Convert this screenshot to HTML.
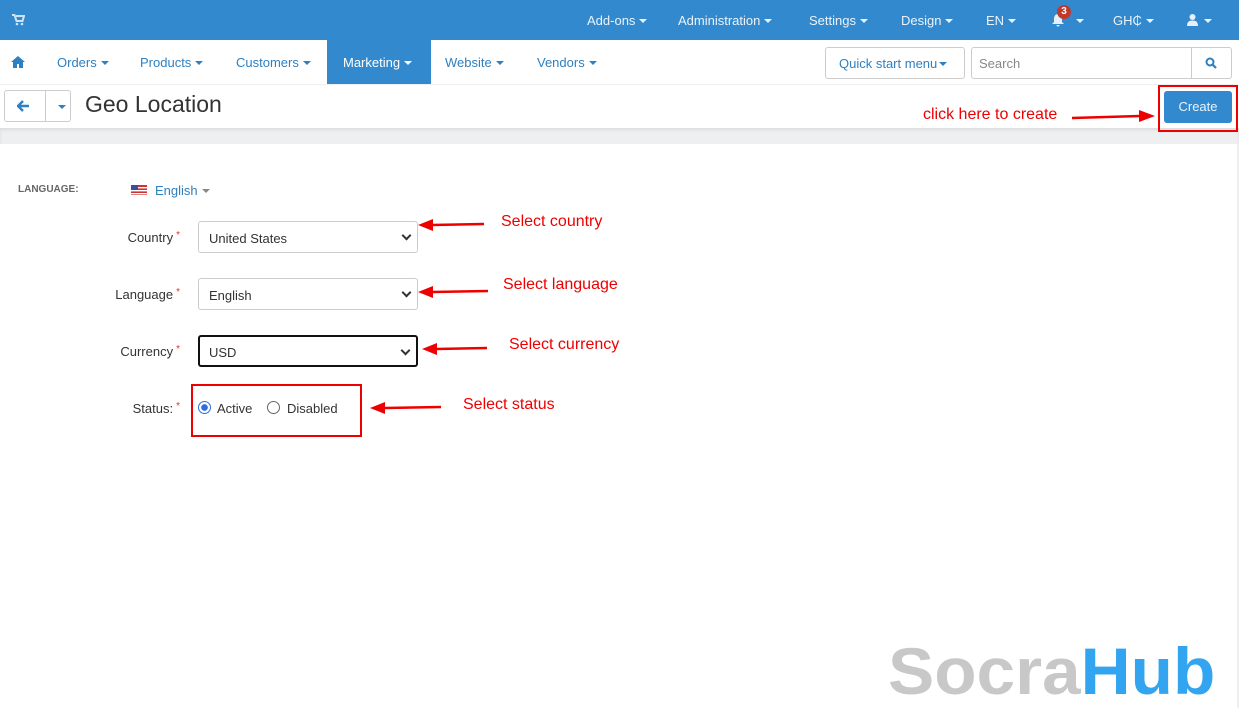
<!DOCTYPE html>
<html><head><style>
*{box-sizing:border-box;margin:0;padding:0}
body{width:1239px;height:708px;overflow:hidden;font-family:"Liberation Sans",sans-serif;background:#fff;position:relative;font-size:13px}
.abs{position:absolute}
.top{left:0;top:0;width:1239px;height:40px;background:#3289cd}
.top span{position:absolute;top:13px;color:#eaf3fb;font-size:13px;white-space:nowrap}
.car{display:inline-block;width:0;height:0;border-left:4px solid transparent;border-right:4px solid transparent;border-top:4px solid currentColor;vertical-align:middle;margin-left:4px;margin-top:-2px}
.nav{left:0;top:40px;width:1239px;height:45px;background:#fff;border-bottom:1px solid #eee}
.nav span{position:absolute;top:15px;color:#2e80c1;font-size:13px;white-space:nowrap}
.act{left:327px;top:40px;width:104px;height:44px;background:#3289cd}
.btn{border:1px solid #ccc;border-radius:3px;background:#fff}
.lbl{position:absolute;color:#333;font-size:13px;text-align:right;width:170px;left:10px}
.lbl i{color:#d33;font-style:normal;font-size:10px;vertical-align:top;margin-left:3px}
.sel{position:absolute;left:198px;width:220px;height:32px;border:1px solid #ccc;border-radius:3px;padding:9px 10px;color:#333;font-size:13px}
.sel:after{content:"";position:absolute;right:7px;top:10px;width:5px;height:5px;border-right:2px solid #333;border-bottom:2px solid #333;transform:rotate(45deg)}
.red{position:absolute;color:#e00;font-size:16px;white-space:nowrap}
</style></head><body>
<div class="abs top">
<svg class="abs" style="left:12px;top:14px" width="13" height="12" viewBox="0 0 13 12"><path d="M0 1h2.5l2 6h6l1.5-5H4" fill="none" stroke="#cfe3f4" stroke-width="2"/><circle cx="5" cy="10" r="1.3" fill="#cfe3f4"/><circle cx="10" cy="10" r="1.3" fill="#cfe3f4"/></svg>
<span style="left:587px">Add-ons<b class="car"></b></span>
<span style="left:678px">Administration<b class="car"></b></span>
<span style="left:809px">Settings<b class="car"></b></span>
<span style="left:901px">Design<b class="car"></b></span>
<span style="left:986px">EN<b class="car"></b></span>
<svg class="abs" style="left:1051px;top:13px" width="14" height="14" viewBox="0 0 14 14"><path d="M7 1C4 1 3 4 3 6v3L1 11h12l-2-2V6c0-2-1-5-4-5zM5.5 12a1.5 1.5 0 003 0z" fill="#e6f0fa"/></svg>
<div class="abs" style="left:1057px;top:5px;width:14px;height:14px;border-radius:7px;background:#c0392b;color:#fff;font-size:10px;text-align:center;line-height:14px;font-weight:bold">3</div>
<span style="left:1072px"><b class="car"></b></span>
<span style="left:1113px">GH₵<b class="car"></b></span>
<svg class="abs" style="left:1187px;top:14px" width="11" height="12" viewBox="0 0 11 12"><circle cx="5.5" cy="3" r="3" fill="#e6f0fa"/><path d="M0 12c0-4 2-5.5 5.5-5.5S11 8 11 12z" fill="#e6f0fa"/></svg>
<span style="left:1200px"><b class="car"></b></span>
</div>
<div class="abs nav">
<svg class="abs" style="left:11px;top:16px" width="14" height="12" viewBox="0 0 14 12"><path d="M7 0L0 6h2v6h4V8h2v4h4V6h2z" fill="#2e80c1"/></svg>
<span style="left:57px">Orders<b class="car"></b></span>
<span style="left:140px">Products<b class="car"></b></span>
<span style="left:236px">Customers<b class="car"></b></span>
<span style="left:445px">Website<b class="car"></b></span>
<span style="left:537px">Vendors<b class="car"></b></span>
</div>
<div class="abs act"><span style="position:absolute;left:16px;top:15px;color:#fff">Marketing<b class="car"></b></span></div>
<div class="abs btn" style="left:825px;top:47px;width:140px;height:32px;color:#2e80c1;padding:8px 13px;font-size:13px">Quick start menu<b class="car" style="margin-left:2px"></b></div>
<div class="abs btn" style="left:971px;top:47px;width:261px;height:32px;color:#888;padding:8px 7px">Search</div>
<div class="abs" style="left:1191px;top:48px;width:1px;height:30px;background:#ccc"></div>
<svg class="abs" style="left:1205px;top:57px" width="12" height="12" viewBox="0 0 12 12"><circle cx="5" cy="5" r="3.5" fill="none" stroke="#2e80c1" stroke-width="2"/><path d="M7.5 7.5L11 11" stroke="#2e80c1" stroke-width="2.2"/></svg>
<div class="abs btn" style="left:4px;top:90px;width:67px;height:32px"></div>
<div class="abs" style="left:45px;top:91px;width:1px;height:30px;background:#ccc"></div>
<svg class="abs" style="left:17px;top:100px" width="13" height="12" viewBox="0 0 13 12"><path d="M6 1L1 6l5 5M1.5 6H12" fill="none" stroke="#2e80c1" stroke-width="2.4"/></svg>
<span class="abs" style="left:54px;top:99px;color:#2e80c1"><b class="car"></b></span>
<div class="abs" style="left:85px;top:91px;font-size:23px;color:#333">Geo Location</div>
<div class="abs" style="left:0;top:128px;width:1239px;height:16px;background:#eeeff1;box-shadow:inset 0 2px 3px rgba(0,0,0,.08)"></div>
<div class="abs" style="left:1237px;top:144px;width:2px;height:564px;background:#eee"></div>
<div class="abs" style="left:1164px;top:91px;width:68px;height:32px;background:#3289cd;border-radius:3px;color:#eaf3fb;text-align:center;line-height:32px;font-size:13px">Create</div>
<div class="abs" style="left:1158px;top:85px;width:80px;height:47px;border:2px solid #e00"></div>
<div class="red" style="left:923px;top:106px">click here to create</div>
<div class="abs" style="left:18px;top:184px;font-size:10px;font-weight:bold;color:#666">LANGUAGE:</div>
<svg class="abs" style="left:131px;top:185px" width="16" height="10" viewBox="0 0 16 10"><rect width="16" height="10" fill="#c33"/><rect y="2" width="16" height="1.4" fill="#fff"/><rect y="5" width="16" height="1.4" fill="#fff"/><rect y="8" width="16" height="1.4" fill="#fff"/><rect width="7" height="5" fill="#3a4fa0"/></svg>
<div class="abs" style="left:155px;top:183px;color:#2e80c1">English<b class="car" style="color:#888"></b></div>
<div class="lbl" style="top:230px">Country<i>*</i></div>
<div class="sel" style="top:221px">United States</div>
<div class="lbl" style="top:287px">Language<i>*</i></div>
<div class="sel" style="top:278px">English</div>
<div class="lbl" style="top:344px">Currency<i>*</i></div>
<div class="sel" style="top:335px;border:2px solid #111;padding:8px 9px">USD</div>
<div class="lbl" style="top:401px">Status:<i>*</i></div>
<div class="abs" style="left:198px;top:401px;width:13px;height:13px;border-radius:50%;border:1px solid #2b6fe0;background:radial-gradient(#2b6fe0 40%,#fff 45%)"></div>
<div class="abs" style="left:217px;top:401px;color:#333">Active</div>
<div class="abs" style="left:267px;top:401px;width:13px;height:13px;border-radius:50%;border:1px solid #666"></div>
<div class="abs" style="left:287px;top:401px;color:#333">Disabled</div>
<div class="abs" style="left:191px;top:384px;width:171px;height:53px;border:2px solid #e00"></div>
<div class="red" style="left:501px;top:213px">Select country</div>
<div class="red" style="left:503px;top:276px">Select language</div>
<div class="red" style="left:509px;top:336px">Select currency</div>
<div class="red" style="left:463px;top:396px">Select status</div>
<svg class="abs" style="left:0;top:0" width="1239" height="708">
<g stroke="#e00" stroke-width="2.5" fill="#e00">
<line x1="1072" y1="118" x2="1140" y2="116"/><path d="M1155 116l-16-6v12z" stroke="none"/>
<line x1="432" y1="225" x2="484" y2="224"/><path d="M418 225l15-6v12z" stroke="none"/>
<line x1="432" y1="292" x2="488" y2="291"/><path d="M418 292l15-6v12z" stroke="none"/>
<line x1="436" y1="349" x2="487" y2="348"/><path d="M422 349l15-6v12z" stroke="none"/>
<line x1="385" y1="408" x2="441" y2="407"/><path d="M370 408l15-6v12z" stroke="none"/>
</g></svg>
<div class="abs" style="left:888px;top:638px;font-size:66px;font-family:'Liberation Sans',sans-serif;font-weight:bold;white-space:nowrap;line-height:1;transform:scaleX(1.05);transform-origin:0 0"><span style="color:#c8c8c8">Socra</span><span style="color:#33a5f0">Hub</span></div>
</body></html>
